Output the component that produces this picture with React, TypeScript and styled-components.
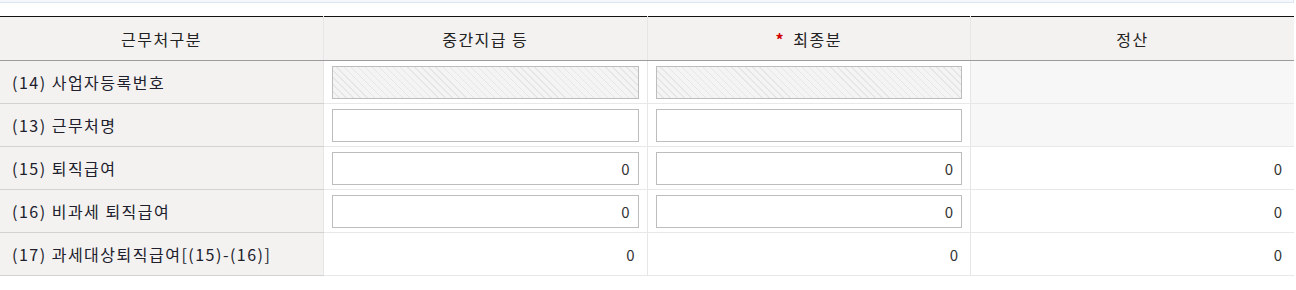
import React from 'react';
import styled, { createGlobalStyle } from 'styled-components';

const GlobalStyle = createGlobalStyle`
  body {
    margin: 0;
    background: #fff;
    font-family: "Noto Sans CJK KR", "Noto Sans", sans-serif;
    color: #222;
  }
`;

const Page = styled.div`
  width: 1294px;
`;

const UpperBox = styled.div`
  height: 2px;
  background: #f4f8fc;
  border-bottom: 1px solid #dce6f1;
  border-right: 1px solid #dce6f1;
  box-sizing: content-box;
  width: 1293px;
`;

const Table = styled.table`
  width: 100%;
  margin-top: 13px;
  border-collapse: collapse;
  table-layout: fixed;
  border-top: 1px solid #111;
  font-size: 16px;
  letter-spacing: 1.5px;
`;

const HeadCell = styled.th`
  height: 43px;
  padding: 0;
  background: #f3f2f0;
  font-weight: 400;
  color: #222;
  text-align: center;
  border-bottom: 1px solid #9c9c9c;
  border-left: 1px solid #e6e6e6;
  &:first-child {
    border-left: none;
  }
`;

const Required = styled.span`
  color: #d40000;
  font-size: 16px;
  font-weight: 700;
  margin-right: 8px;
`;

const LabelCell = styled.th`
  height: 42px;
  padding: 0 0 0 12px;
  background: #f3f2f0;
  font-weight: 400;
  text-align: left;
  color: #20202c;
  border-bottom: 1px solid #d2d2d2;
  white-space: nowrap;
`;

const ValueCell = styled.td<{ $shade?: boolean }>`
  height: 41px;
  padding: 0 8px;
  background: ${(p) => (p.$shade ? '#f7f7f7' : '#fff')};
  border-bottom: 1px solid #e8e8e8;
  border-left: 1px solid #e6e6e6;
  text-align: right;
  vertical-align: middle;
`;

const Amount = styled.span`
  display: inline-block;
  padding-right: 4px;
  font-size: 15px;
  letter-spacing: 0;
  color: #333;
`;

const Field = styled.input<{ $locked?: boolean }>`
  display: block;
  width: 100%;
  height: 33px;
  box-sizing: border-box;
  border: 1px solid #bdbdbd;
  padding: 0 8px;
  font-family: inherit;
  font-size: 15px;
  color: #333;
  text-align: right;
  outline: none;
  background: ${(p) =>
    p.$locked
      ? 'repeating-linear-gradient(45deg, #f4f4f4 0px, #f4f4f4 4px, #e6e6e6 4px, #e6e6e6 5px)'
      : '#fff'};
`;

type Row = {
  label: string;
  kind: 'locked' | 'text' | 'money' | 'total';
};

const rows: Row[] = [
  { label: '(14) 사업자등록번호', kind: 'locked' },
  { label: '(13) 근무처명', kind: 'text' },
  { label: '(15) 퇴직급여', kind: 'money' },
  { label: '(16) 비과세 퇴직급여', kind: 'money' },
  { label: '(17) 과세대상퇴직급여[(15)-(16)]', kind: 'total' },
];

function renderCells(row: Row) {
  if (row.kind === 'locked') {
    return (
      <>
        <ValueCell><Field $locked disabled /></ValueCell>
        <ValueCell><Field $locked disabled /></ValueCell>
        <ValueCell $shade />
      </>
    );
  }
  if (row.kind === 'text') {
    return (
      <>
        <ValueCell><Field defaultValue="" /></ValueCell>
        <ValueCell><Field defaultValue="" /></ValueCell>
        <ValueCell $shade />
      </>
    );
  }
  if (row.kind === 'money') {
    return (
      <>
        <ValueCell><Field defaultValue="0" /></ValueCell>
        <ValueCell><Field defaultValue="0" /></ValueCell>
        <ValueCell><Amount>0</Amount></ValueCell>
      </>
    );
  }
  return (
    <>
      <ValueCell><Amount>0</Amount></ValueCell>
      <ValueCell><Amount>0</Amount></ValueCell>
      <ValueCell><Amount>0</Amount></ValueCell>
    </>
  );
}

export default function App() {
  return (
    <Page>
      <GlobalStyle />
      <UpperBox />
      <Table>
        <thead>
          <tr>
            <HeadCell>근무처구분</HeadCell>
            <HeadCell>중간지급 등</HeadCell>
            <HeadCell><Required>*</Required>최종분</HeadCell>
            <HeadCell>정산</HeadCell>
          </tr>
        </thead>
        <tbody>
          {rows.map((row) => (
            <tr key={row.label}>
              <LabelCell>{row.label}</LabelCell>
              {renderCells(row)}
            </tr>
          ))}
        </tbody>
      </Table>
    </Page>
  );
}
